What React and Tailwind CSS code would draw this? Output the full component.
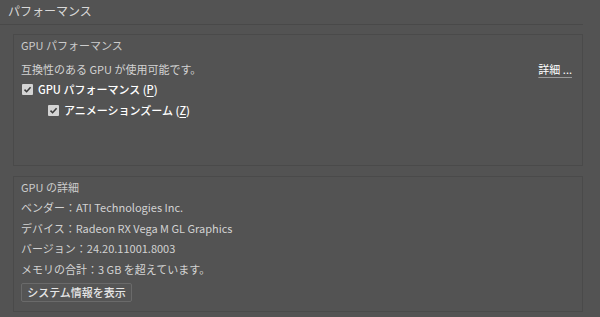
import React from 'react';

const Check = ({ className }) => (
  <span className={`inline-flex items-center justify-center w-[11px] h-[11px] bg-[#d4d4d4] rounded-[1px] ${className || ''}`}>
    <svg width="9" height="9" viewBox="0 0 9 9">
      <path d="M1.5 4.6 L3.6 6.7 L7.6 2.2" fill="none" stroke="#3c3c3c" strokeWidth="1.6" />
    </svg>
  </span>
);

export default function App() {
  const details = [
    'ベンダー：ATI Technologies Inc.',
    'デバイス：Radeon RX Vega M GL Graphics',
    'バージョン：24.20.11001.8003',
    'メモリの合計：3 GB を超えています。',
  ];

  return (
    <div
      className="w-[600px] h-[317px] bg-[#535353] text-[#d2d2d2] text-[11px] overflow-hidden"
      style={{ fontFamily: '"Noto Sans CJK JP", "Noto Sans", sans-serif' }}
    >
      {/* section title */}
      <div className="w-[583px] border-b border-[#494949] pl-[8px] h-[25px] leading-[22px] text-[12px] text-[#d8d8d8]">
        パフォーマンス
      </div>

      {/* GPU performance group */}
      <div className="ml-[13px] mt-[9px] w-[570px] h-[132px] border border-[#4a4a4a] px-[7px]">
        <div className="h-[20px] leading-[20px] text-[#cccccc] mb-[4px]">GPU パフォーマンス</div>
        <div className="h-[20px] leading-[20px] flex justify-between">
          <span>互換性のある GPU が使用可能です。</span>
          <span className="text-white underline underline-offset-[3px] decoration-[#9a9a9a] mr-[3px]">詳細 ...</span>
        </div>
        <div className="h-[21px] flex items-center gap-[5px] pl-[1px] text-white font-medium">
          <Check />
          <span>
            GPU パフォーマンス (<span className="underline underline-offset-2">P</span>)
          </span>
        </div>
        <div className="h-[21px] flex items-center gap-[5px] pl-[27px] text-white font-medium">
          <Check />
          <span>
            アニメーションズーム (<span className="underline underline-offset-2">Z</span>)
          </span>
        </div>
      </div>

      {/* GPU details group */}
      <div className="ml-[13px] mt-[10px] w-[570px] h-[136px] border border-[#4a4a4a] px-[7px]">
        <div className="h-[20px] leading-[20px] text-[#cccccc]">GPU の詳細</div>
        {details.map((d, i) => (
          <div key={i} className="h-[20.5px] leading-[20.5px]">{d}</div>
        ))}
        <button className="mt-[4px] w-[111px] h-[19px] border border-[#6a6a6a] bg-[#555555] rounded-[2px] text-[#e6e6e6] font-medium text-[11px] leading-[17px]">
          システム情報を表示
        </button>
      </div>
    </div>
  );
}
